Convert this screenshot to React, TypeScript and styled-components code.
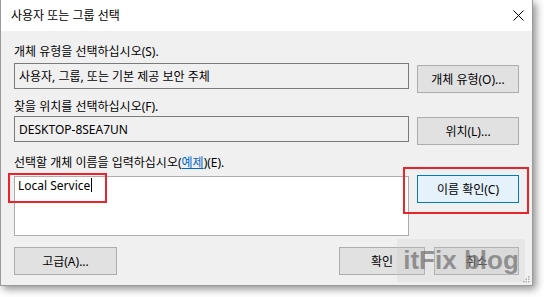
import React from "react";
import styled, { createGlobalStyle } from "styled-components";

const GlobalStyle = createGlobalStyle`
  html, body {
    margin: 0;
    padding: 0;
    background: #ffffff;
  }
  body {
    font-family: "Noto Sans", "Noto Sans CJK KR", sans-serif;
    font-size: 12px;
    color: #000;
  }
`;

const Page = styled.div`
  width: 544px;
  height: 297px;
  position: relative;
  overflow: hidden;
`;

const Dialog = styled.div`
  width: 533px;
  height: 286px;
  box-sizing: border-box;
  border: 1px solid #9a9a9a;
  border-top: none;
  background: #f0f0f0;
  display: flex;
  flex-direction: column;
  box-shadow: 3px 3px 8px rgba(0, 0, 0, 0.45);
`;

const TitleBar = styled.div`
  height: 31px;
  background: #ffffff;
  display: flex;
  align-items: center;
  justify-content: space-between;
  padding: 0 8px 0 10px;
  flex-shrink: 0;
`;

const Title = styled.span`
  font-size: 12px;
  line-height: 16px;
`;

const Body = styled.div`
  flex: 1;
  display: flex;
  flex-direction: column;
  padding: 12px 13px 0 13px;
`;

const Label = styled.div<{ $top?: number }>`
  line-height: 16px;
  height: 16px;
  margin-top: ${(p) => p.$top ?? 0}px;
  white-space: nowrap;
`;

const Link = styled.span`
  color: #0066cc;
  text-decoration: underline;
`;

const Row = styled.div<{ $top: number }>`
  display: flex;
  align-items: flex-start;
  gap: 8px;
  margin-top: ${(p) => p.$top}px;
`;

const Field = styled.div<{ $height: number; $white?: boolean }>`
  width: 395px;
  height: ${(p) => p.$height}px;
  box-sizing: border-box;
  border: 1px solid ${(p) => (p.$white ? "#adadad" : "#7a7a7a")};
  background: ${(p) => (p.$white ? "#ffffff" : "#f0f0f0")};
  padding: ${(p) => (p.$white ? "0 3px" : "0 4px")};
  display: flex;
  align-items: ${(p) => (p.$white ? "flex-start" : "center")};
  white-space: nowrap;
`;

const Caret = styled.span`
  display: inline-block;
  width: 1px;
  height: 14px;
  background: #000;
  margin-left: 1px;
  vertical-align: -2px;
`;

const Button = styled.div<{ $width?: number; $top?: number; $primary?: boolean }>`
  width: ${(p) => p.$width ?? 102}px;
  height: 28px;
  box-sizing: border-box;
  margin-top: ${(p) => p.$top ?? 0}px;
  border: 1px solid ${(p) => (p.$primary ? "#0078d7" : "#adadad")};
  background: ${(p) => (p.$primary ? "#e5f1fb" : "#e1e1e1")};
  display: flex;
  align-items: center;
  justify-content: center;
  white-space: nowrap;
  flex-shrink: 0;
`;

const Footer = styled.div`
  display: flex;
  align-items: center;
  margin-top: 11px;
  gap: 9px;
`;

const Spacer = styled.div`
  flex: 1;
`;

const Highlight = styled.div<{ $x: number; $y: number; $w: number; $h: number }>`
  position: absolute;
  left: ${(p) => p.$x}px;
  top: ${(p) => p.$y}px;
  width: ${(p) => p.$w}px;
  height: ${(p) => p.$h}px;
  box-sizing: border-box;
  border: 2px solid #e8242c;
  pointer-events: none;
`;

const Watermark = styled.div`
  position: absolute;
  left: 397px;
  top: 239px;
  width: 128px;
  height: 43px;
  background: rgba(200, 200, 200, 0.25);
  display: flex;
  align-items: center;
  justify-content: center;
  font-family: "Liberation Sans", Arial, sans-serif;
  font-weight: bold;
  font-size: 26px;
  color: rgba(110, 110, 110, 0.7);
  pointer-events: none;
`;

const Grip = styled.svg`
  position: absolute;
  left: 523px;
  top: 276px;
`;

export default function App() {
  return (
    <Page>
      <GlobalStyle />
      <Dialog>
        <TitleBar>
          <Title>사용자 또는 그룹 선택</Title>
          <svg width="11" height="11" viewBox="0 0 11 11">
            <path d="M0.5 0.5 L10.5 10.5 M10.5 0.5 L0.5 10.5" stroke="#000" strokeWidth="1" />
          </svg>
        </TitleBar>
        <Body>
          <Label $top={1}>개체 유형을 선택하십시오(S).</Label>
          <Row $top={3}>
            <Field $height={26}>사용자, 그룹, 또는 기본 제공 보안 주체</Field>
            <Button $top={2}>개체 유형(O)...</Button>
          </Row>
          <Label $top={6}>찾을 위치를 선택하십시오(F).</Label>
          <Row $top={1}>
            <Field $height={26}>DESKTOP-8SEA7UN</Field>
            <Button $top={1}>위치(L)...</Button>
          </Row>
          <Label $top={10}>
            선택할 개체 이름을 입력하십시오(<Link>예제</Link>)(E).
          </Label>
          <Row $top={5}>
            <Field $height={60} $white>
              <span>
                Local Service
                <Caret />
              </span>
            </Field>
            <Button $top={-1} $primary>
              이름 확인(C)
            </Button>
          </Row>
          <Footer>
            <Button $width={103}>고급(A)...</Button>
            <Spacer />
            <Button $width={86}>확인</Button>
            <Button $width={85}>취소</Button>
          </Footer>
        </Body>
      </Dialog>
      <Highlight $x={8} $y={173} $w={99} $h={30} />
      <Highlight $x={403} $y={167} $w={126} $h={47} />
      <Watermark>itFix blog</Watermark>
      <Grip width="7" height="7" viewBox="0 0 7 7">
        <rect x="5" y="0" width="1.5" height="1.5" fill="#b0b0b0" />
        <rect x="2.5" y="2.5" width="1.5" height="1.5" fill="#b0b0b0" />
        <rect x="5" y="2.5" width="1.5" height="1.5" fill="#b0b0b0" />
        <rect x="0" y="5" width="1.5" height="1.5" fill="#b0b0b0" />
        <rect x="2.5" y="5" width="1.5" height="1.5" fill="#b0b0b0" />
        <rect x="5" y="5" width="1.5" height="1.5" fill="#b0b0b0" />
      </Grip>
    </Page>
  );
}
